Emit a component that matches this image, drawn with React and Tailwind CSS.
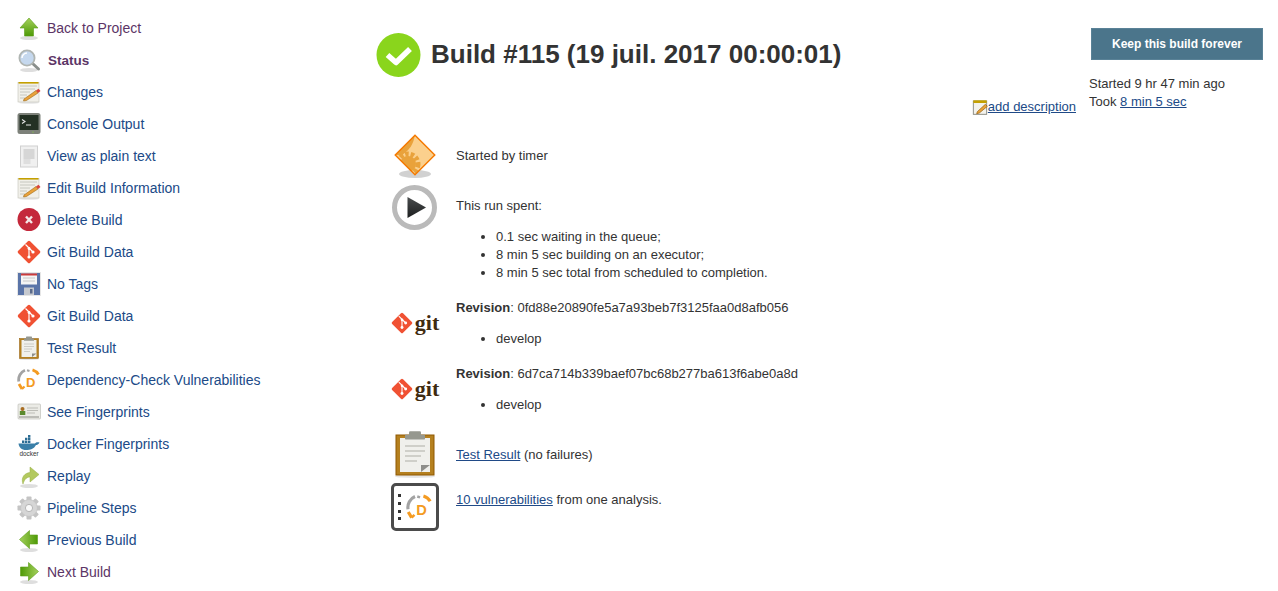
import React from "react";

const Shadow = () => <ellipse cx="12" cy="22" rx="9" ry="2" fill="#000" opacity="0.13" />;

const Arrow = ({ rotate = 0 }) => (
  <svg width="24" height="24" viewBox="0 0 24 24">
    <defs>
      <linearGradient id="ga" x1="0" y1="0" x2="0" y2="1">
        <stop offset="0" stopColor="#a5d15d" />
        <stop offset="1" stopColor="#4e9a06" />
      </linearGradient>
    </defs>
    <Shadow />
    <path
      transform={`rotate(${rotate} 12 11.5)`}
      d="M12 2 L21 12 H16.5 V20 H7.5 V12 H3 Z"
      fill="url(#ga)"
      stroke="#5c9d17"
      strokeWidth="0.6"
    />
  </svg>
);

const Magnifier = () => (
  <svg width="24" height="24" viewBox="0 0 24 24">
    <Shadow />
    <path d="M14.5 14.5 L21.5 21" stroke="#8a8f8c" strokeWidth="3" strokeLinecap="round" />
    <circle cx="10" cy="10" r="7.6" fill="#c5d8ee" stroke="#b0b5b2" strokeWidth="1.8" />
    <path d="M5 10 a5 5 0 0 1 5 -5" stroke="#fff" strokeWidth="1.5" fill="none" />
  </svg>
);

const Notepad = () => (
  <svg width="24" height="24" viewBox="0 0 24 24">
    <ellipse cx="12" cy="22.8" rx="10" ry="1" fill="#000" opacity="0.1" />
    <rect x="1" y="2.5" width="21" height="19.5" fill="#f1f0ea" stroke="#c4c2b8" strokeWidth="0.6" />
    <rect x="1.5" y="2" width="20" height="1.6" fill="#c4a000" />
    <path d="M3 6h17M3 9h15M3 12h10M3 15h7M3 18h5" stroke="#bdbdb5" strokeWidth="0.8" />
    <path d="M7 19 L19 10.5 L21 13 L9.5 20.5 L6.5 21 Z" fill="#e9a23b" stroke="#8f5902" strokeWidth="0.5" />
    <path d="M19 10.5 L21 13 L23.5 11 L21.5 8.8 Z" fill="#d9453b" />
  </svg>
);

const Terminal = () => (
  <svg width="24" height="24" viewBox="0 0 24 24">
    <rect x="0.5" y="1" width="23" height="21" rx="2.5" fill="#7d817a" />
    <rect x="2.5" y="3" width="19" height="15" fill="#233023" />
    <path d="M5 7.5 L8 9.5 L5 11.5" stroke="#e6e6e6" strokeWidth="1.1" fill="none" />
    <path d="M9 13h5" stroke="#e6e6e6" strokeWidth="1" />
    <circle cx="16" cy="20" r="0.6" fill="#8ae234" />
  </svg>
);

const PlainText = () => (
  <svg width="24" height="24" viewBox="0 0 24 24">
    <rect x="3.5" y="2" width="17" height="21" fill="#f0f0f0" stroke="#d0d0d0" />
    <rect x="6.5" y="5" width="11" height="10" fill="#d6d6d6" />
    <rect x="6.5" y="15" width="7" height="5" fill="#dedede" />
  </svg>
);

const DeleteIcon = () => (
  <svg width="24" height="24" viewBox="0 0 24 24">
    <circle cx="12" cy="11.5" r="11.5" fill="#c4283b" />
    <path d="M9 8.5 L15 15 M15 8.5 L9 15" stroke="#f4e6e6" strokeWidth="2.4" />
  </svg>
);

const GitDiamond = ({ size = 24 }) => (
  <svg width={size} height={size} viewBox="0 0 24 24">
    <rect x="3.6" y="3.6" width="16.8" height="16.8" rx="1.6" fill="#f05133" transform="rotate(45 12 12)" />
    <path d="M8.5 4.5 L16 12 M12 8 V17" stroke="#fff" strokeWidth="1.2" />
    <circle cx="12" cy="17" r="1.6" fill="#fff" />
    <circle cx="12" cy="8.5" r="1.4" fill="#fff" />
    <circle cx="16" cy="12" r="1.6" fill="#fff" />
  </svg>
);

const Floppy = () => (
  <svg width="24" height="24" viewBox="0 0 24 24">
    <rect x="0" y="0" width="24" height="24" fill="#e6e6e6" />
    <rect x="1" y="1" width="22" height="22" fill="#5a74a8" />
    <rect x="4" y="1.5" width="16" height="11" fill="#f5f5f5" />
    <rect x="4" y="1.5" width="16" height="2" fill="#cc3b3b" />
    <path d="M6 6h12M6 9h12" stroke="#c8c8c8" />
    <rect x="7" y="15.5" width="10" height="7.5" fill="#c6c9cf" />
    <rect x="13" y="17" width="2.5" height="4.5" fill="#5a6a8a" />
  </svg>
);

const Clipboard = ({ size = 24 }) => (
  <svg width={size} height={size} viewBox="0 0 24 24">
    <ellipse cx="12" cy="23.2" rx="10" ry="0.8" fill="#000" opacity="0.1" />
    <rect x="2.5" y="2.5" width="19" height="20" fill="#b5801f" stroke="#8f5902" strokeWidth="0.5" />
    <rect x="4.5" y="4" width="15" height="17" fill="#f0f0ec" />
    <path d="M7 8h10M7 10.5h10M7 13h8M7 15.5h6" stroke="#c3c3bd" strokeWidth="0.8" />
    <path d="M15 21 V17.5 H19.5 L15 21 Z" fill="#8e8e8a" />
    <rect x="7" y="2.4" width="10" height="2.4" rx="0.4" fill="#96988f" />
    <rect x="9" y="0.6" width="6" height="2.4" rx="0.6" fill="#96988f" />
  </svg>
);

const DepCheck = ({ size = 24 }) => (
  <svg width={size} height={size} viewBox="0 0 24 24">
    <path d="M1.8 13.5 A10.5 10.5 0 0 1 8 2.2" stroke="#a3a3a3" strokeWidth="2.8" fill="none" />
    <path d="M10 2.2 L12.5 3" stroke="#a3a3a3" strokeWidth="2.2" />
    <path d="M15.5 1.8 A10.5 10.5 0 0 1 21.5 6.5" stroke="#f49b22" strokeWidth="2.8" fill="none" />
    <path d="M2 16 L5 21" stroke="#f49b22" strokeWidth="2.8" />
    <path d="M5 21 L7.5 18.5" stroke="#f49b22" strokeWidth="2.2" />
    <text x="9" y="19" fontSize="13" fontWeight="700" fill="#f49b22" fontFamily="Liberation Sans, sans-serif">D</text>
  </svg>
);

const IdCard = () => (
  <svg width="24" height="24" viewBox="0 0 24 24">
    <rect x="1" y="4" width="22.5" height="15" rx="1" fill="#ebebe6" stroke="#b8b8b2" strokeWidth="0.6" />
    <circle cx="5.5" cy="9" r="2" fill="#a86d22" />
    <rect x="2.8" y="11" width="5.5" height="4" fill="#5b8a2e" />
    <path d="M10 8h11M10 10.5h11M10 13h8" stroke="#bdbdb7" />
    <path d="M2 17h20" stroke="#8d8d88" />
  </svg>
);

const Docker = () => (
  <svg width="24" height="24" viewBox="0 0 24 24">
    <path d="M1.5 11.5 H18 C19 10 20.5 10 22.5 10.5 C21.5 12.5 20 13 19 13 C17 17 13.5 18 9 18 C4.5 18 2 15.5 1.5 11.5 Z" fill="#3a7fa8" />
    <path d="M5 8.5h2.4v2.4H5zM8 8.5h2.4v2.4H8zM11 8.5h2.4v2.4H11zM8 5.7h2.4v2.4H8zM11 5.7h2.4v2.4H11zM11 3h2.4v2.4H11z" fill="#2c6d94" />
    <text x="12" y="23.5" textAnchor="middle" fontSize="6.4" fill="#333" fontFamily="Liberation Sans, sans-serif">docker</text>
  </svg>
);

const Replay = () => (
  <svg width="24" height="24" viewBox="0 0 24 24">
    <Shadow />
    <path d="M6 20 C3.5 13 8 9 13 8.5 V3 L22 10.5 L13 18 V13 C10 13 7.5 15 6 20 Z" fill="#b3c95f" stroke="#97ad42" strokeWidth="0.5" />
  </svg>
);

const Gear = () => (
  <svg width="24" height="24" viewBox="0 0 24 24">
    {[0, 45, 90, 135, 180, 225, 270, 315].map((a) => (
      <rect key={a} x="9.5" y="0.5" width="5" height="6" rx="0.8" fill="#c4c4c4" transform={`rotate(${a} 12 12)`} />
    ))}
    <circle cx="12" cy="12" r="8.4" fill="#d6d6d6" stroke="#c0c0c0" strokeWidth="0.6" />
    <circle cx="12" cy="12" r="3.6" fill="#fafafa" stroke="#a8a8a8" strokeWidth="0.8" />
  </svg>
);

const menu = [
  { label: "Back to Project", icon: <Arrow />, visited: true },
  { label: "Status", icon: <Magnifier />, visited: true, bold: true },
  { label: "Changes", icon: <Notepad /> },
  { label: "Console Output", icon: <Terminal /> },
  { label: "View as plain text", icon: <PlainText /> },
  { label: "Edit Build Information", icon: <Notepad /> },
  { label: "Delete Build", icon: <DeleteIcon /> },
  { label: "Git Build Data", icon: <GitDiamond /> },
  { label: "No Tags", icon: <Floppy /> },
  { label: "Git Build Data", icon: <GitDiamond /> },
  { label: "Test Result", icon: <Clipboard /> },
  { label: "Dependency-Check Vulnerabilities", icon: <DepCheck /> },
  { label: "See Fingerprints", icon: <IdCard /> },
  { label: "Docker Fingerprints", icon: <Docker /> },
  { label: "Replay", icon: <Replay /> },
  { label: "Pipeline Steps", icon: <Gear /> },
  { label: "Previous Build", icon: <Arrow rotate={-90} /> },
  { label: "Next Build", icon: <Arrow rotate={90} />, visited: true },
];

const GitLogo = () => (
  <div className="flex items-center justify-center">
    <GitDiamond size={22} />
    <span className="ml-[2px] font-['Liberation_Serif',serif] font-bold text-[22px] leading-[22px] text-[#3f2b10]">git</span>
  </div>
);

const BuildRow = ({ icon, children, className = "" }) => (
  <div className={`flex ${className}`}>
    <div className="w-[48px] mr-[17px] shrink-0 flex items-center justify-center">{icon}</div>
    <div className="min-w-0">{children}</div>
  </div>
);

const Bullets = ({ items }) => (
  <ul className="list-disc pl-[40px] mt-[13px]">
    {items.map((item) => (
      <li key={item}>{item}</li>
    ))}
  </ul>
);

export default function App() {
  return (
    <div className="flex w-[1278px] h-[591px] overflow-hidden bg-white text-[#333] font-['Liberation_Sans',sans-serif] text-[13px] leading-[18px]">
      <nav className="w-[376px] shrink-0 pt-[12px] pl-[17px] text-[14px]">
        {menu.map((item, i) => (
          <a
            key={i}
            className={`flex items-center h-[32px] ${item.visited ? "text-[#5c3566]" : "text-[#204a87]"} ${item.bold ? "font-bold text-[13.5px]" : ""}`}
          >
            <span className="w-[24px] h-[24px] shrink-0">{item.icon}</span>
            <span className={item.bold ? "ml-[7px] pt-[1px]" : "ml-[6px]"}>{item.label}</span>
          </a>
        ))}
      </nav>

      <main className="flex-1 min-w-0 pt-[30px]">
        <div className="flex items-center h-[50px]">
          <svg width="45" height="45" viewBox="0 0 45 45">
            <circle cx="22.5" cy="22" r="22" fill="#8ad51c" />
            <path d="M11.5 22 L20 29.5 L34 16" stroke="#fff" strokeWidth="5.5" fill="none" strokeLinejoin="round" />
          </svg>
          <h1 className="ml-[10px] -mt-[3px] font-bold text-[26px] leading-[50px]">Build #115 (19 juil. 2017 00:00:01)</h1>
        </div>
        <div className="flex justify-end items-center w-[700px] h-[18px] mt-[18px]">
          <svg width="16" height="16" viewBox="0 0 24 24">
            <rect x="2" y="3" width="20" height="20" fill="#f3f2ec" stroke="#8a8a80" strokeWidth="1.4" />
            <rect x="2" y="2" width="20" height="4" fill="#c4a000" />
            <path d="M8 19 L20 8 L23 11 L11 21 L7 22 Z" fill="#e9a23b" stroke="#8f5902" />
          </svg>
          <a className="text-[13px] text-[#204a87] underline">add description</a>
        </div>

        <div className="ml-[15px] mt-[15px]">
          <BuildRow
            className="h-[48px] items-center"
            icon={
              <svg width="48" height="48" viewBox="0 0 48 48">
                <defs>
                  <clipPath id="dia">
                    <rect x="10" y="10" width="28" height="28" transform="rotate(45 24 24)" />
                  </clipPath>
                </defs>
                <ellipse cx="24" cy="43" rx="16" ry="4" fill="#000" opacity="0.18" />
                <rect x="10" y="10" width="28" height="28" fill="#fbd08d" transform="rotate(45 24 24)" />
                <g clipPath="url(#dia)">
                  <path d="M3 24 L24 3 C23 12 19 19 11 24 Z" fill="#e9a23b" />
                  <circle cx="17" cy="33" r="10" fill="none" stroke="#e9a23b" strokeWidth="5" strokeDasharray="3.5 2" />
                  <circle cx="17" cy="33" r="8" fill="#e9a23b" />
                </g>
                <rect x="10" y="10" width="28" height="28" fill="none" stroke="#f57900" strokeWidth="1.4" transform="rotate(45 24 24)" />
              </svg>
            }
          >
            <div className="pt-[2px]">Started by timer</div>
          </BuildRow>
          <BuildRow
            className="mt-[4px]"
            icon={
              <svg className="self-start" width="48" height="48" viewBox="0 0 48 48">
                <defs>
                  <linearGradient id="pl" x1="0" y1="0" x2="0" y2="1">
                    <stop offset="0" stopColor="#4a4d4e" />
                    <stop offset="1" stopColor="#1c1e1f" />
                  </linearGradient>
                </defs>
                <circle cx="23.5" cy="24.5" r="20" fill="#fff" stroke="#bababa" strokeWidth="5" />
                <path d="M16.5 14 L35 24.5 L16.5 35 Z" fill="url(#pl)" />
              </svg>
            }
          >
            <div className="pt-[14px]">
              This run spent:
              <Bullets
                items={[
                  "0.1 sec waiting in the queue;",
                  "8 min 5 sec building on an executor;",
                  "8 min 5 sec total from scheduled to completion.",
                ]}
              />
            </div>
          </BuildRow>
          <BuildRow className="mt-[16px]" icon={<GitLogo />}>
            <div className="pt-[1px]">
              <b>Revision</b>: 0fd88e20890fe5a7a93beb7f3125faa0d8afb056
              <Bullets items={["develop"]} />
            </div>
          </BuildRow>
          <BuildRow className="mt-[16px]" icon={<GitLogo />}>
            <div className="pt-[1px]">
              <b>Revision</b>: 6d7ca714b339baef07bc68b277ba613f6abe0a8d
              <Bullets items={["develop"]} />
            </div>
          </BuildRow>
          <BuildRow className="mt-[16px] h-[48px] items-center" icon={<Clipboard size={48} />}>
            <div className="pt-[2px]">
              <a className="text-[#204a87] underline">Test Result</a> (no failures)
            </div>
          </BuildRow>
          <BuildRow
            className="mt-[5px]"
            icon={
              <div className="relative w-[48px] h-[48px] border-[3px] border-[#4b4b4b] rounded-[5px] bg-white flex items-center justify-center">
                <span className="absolute left-[4px] top-[8px] w-[3px] h-[3px] bg-[#333] shadow-[0_8px_0_#333,0_16px_0_#333,0_23px_0_#333]" />
                <span className="ml-[8px] mt-[1px]"><DepCheck size={27} /></span>
              </div>
            }
          >
            <div className="pt-[8px]">
              <a className="text-[#204a87] underline">10 vulnerabilities</a> from one analysis.
            </div>
          </BuildRow>
        </div>
      </main>

      <aside className="w-[189px] shrink-0 pt-[28px]">
        <button className="block ml-[2px] w-[172px] h-[32px] bg-[#4b758b] border border-[#5a8297] text-white font-bold text-[12px]">
          Keep this build forever
        </button>
        <div className="mt-[15px]">Started 9 hr 47 min ago</div>
        <div>
          Took <a className="text-[#204a87] underline">8 min 5 sec</a>
        </div>
      </aside>
    </div>
  );
}
